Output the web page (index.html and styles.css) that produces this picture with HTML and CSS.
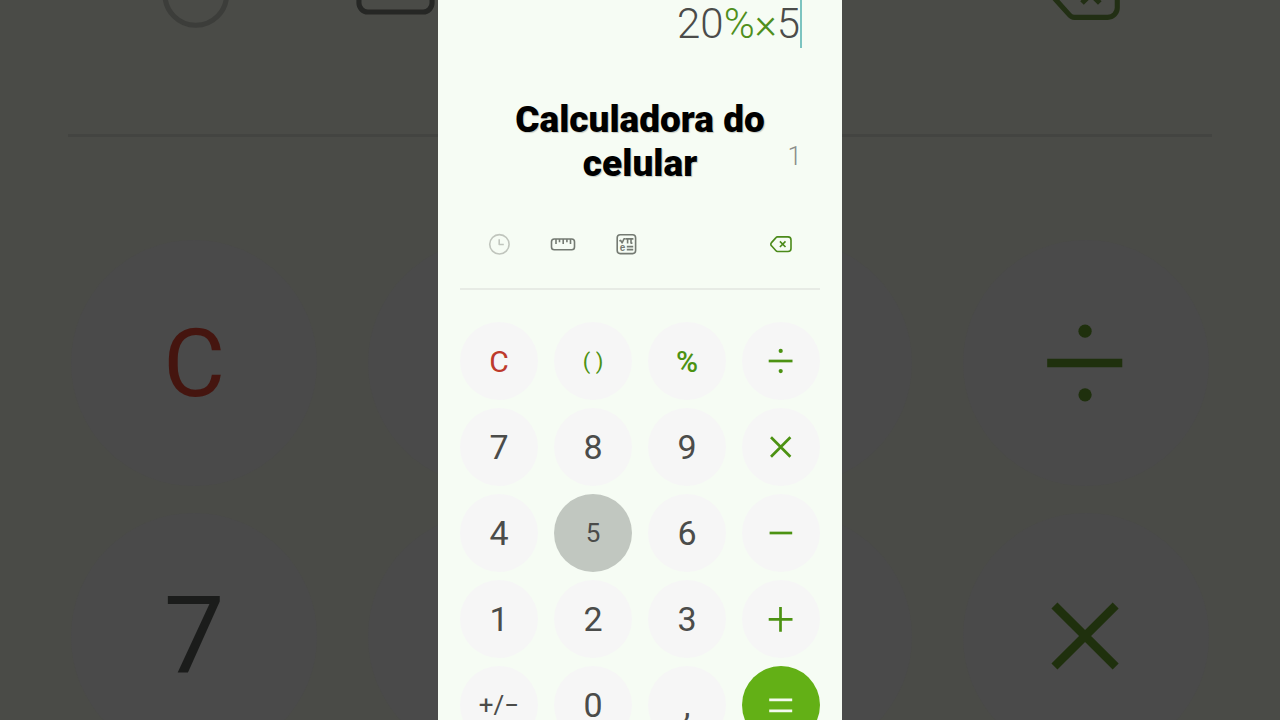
FILE: index.html
```html
<!DOCTYPE html>
<html lang="pt-BR">
<head>
  <meta charset="UTF-8" />
  <meta name="viewport" content="width=device-width, initial-scale=1.0" />
  <title>Calculadora do celular</title>
  <link rel="stylesheet" href="styles.css">
</head>
<body>
  <svg class="sprite" aria-hidden="true">
    <symbol id="clock" viewBox="0 0 28 28">
      <circle cx="14.4" cy="14.3" r="9.7" />
      <path d="M14.2 9.2v5.3h4.6" />
    </symbol>
    <symbol id="ruler" viewBox="0 0 28 28">
      <rect x="2.5" y="9" width="23" height="10.8" rx="2.8" />
      <path d="M7 9v5M10.5 9v3.2M14.2 9v5M17.9 9v3.2M21.5 9v5" />
    </symbol>
    <symbol id="science" viewBox="0 0 28 28">
      <rect x="4.2" y="4.8" width="18.4" height="18.8" rx="3" />
      <path d="M6.4 11l1.3-.6 1.4 2.5 1.9-4.1h1.4" />
      <path d="M12.4 8.9h8M14.6 8.9v4.6M18 8.9v4.2h1.4" />
      <path d="M13.8 16.6h6.4M13.8 19.6h6.4" />
      <text x="6.8" y="20.8">e</text>
    </symbol>
    <symbol id="backspace" viewBox="0 0 28 28">
      <path d="M10.5 6.9H21a3 3 0 0 1 3 3v8.6a3 3 0 0 1-3 3H10.5a2 2 0 0 1-1.5-.7l-4.5-5a2.2 2.2 0 0 1 0-3.2l4.5-5a2 2 0 0 1 1.5-.7z" />
      <path d="M12.9 11.4l5.6 5.6M18.5 11.4L12.9 17" />
    </symbol>
    <symbol id="divide" viewBox="0 0 26 26">
      <path d="M.7 13h23.8" />
      <circle class="dot" cx="12.7" cy="2.9" r="2.1" />
      <circle class="dot" cx="12.7" cy="23.1" r="2.1" />
    </symbol>
    <symbol id="times" viewBox="0 0 26 26">
      <path d="M3 3.3l19.4 19.4M22.4 3.3L3 22.7" />
    </symbol>
    <symbol id="minus" viewBox="0 0 26 26">
      <path d="M1.6 13h22.6" />
    </symbol>
    <symbol id="plus" viewBox="0 0 26 26">
      <path d="M.7 13.3h23.8M12.5 .9v24.8" />
    </symbol>
    <symbol id="equals" viewBox="0 0 26 26">
      <path d="M1.2 7.9h23M1.2 18.9h23" />
    </symbol>
  </svg>

  <div class="stage">
    <!-- enlarged, darkened copy behind the phone -->
    <div class="backdrop" aria-hidden="true">
      <div class="toolbar">
        <svg class="icon muted"><use href="#clock" /></svg>
        <svg class="icon"><use href="#ruler" /></svg>
        <svg class="icon"><use href="#science" /></svg>
        <svg class="icon erase"><use href="#backspace" /></svg>
      </div>
      <hr class="divider" />
      <div class="keys">
        <button class="key clear" tabindex="-1">C</button>
        <button class="key" tabindex="-1"></button>
        <button class="key" tabindex="-1"></button>
        <button class="key op" tabindex="-1"><svg><use href="#divide" /></svg></button>
        <button class="key" tabindex="-1">7</button>
        <button class="key" tabindex="-1"></button>
        <button class="key" tabindex="-1"></button>
        <button class="key op" tabindex="-1"><svg><use href="#times" /></svg></button>
      </div>
    </div>

    <main class="phone">
      <div class="display">
        <div class="expression">20<span class="sign">%×</span>5</div>
        <div class="result-row">
          <h1>Calculadora do celular</h1>
          <output class="result">1</output>
        </div>
      </div>
      <div class="toolbar">
        <button class="tool muted" aria-label="Histórico"><svg class="icon"><use href="#clock" /></svg></button>
        <button class="tool" aria-label="Conversor de unidades"><svg class="icon"><use href="#ruler" /></svg></button>
        <button class="tool" aria-label="Modo científico"><svg class="icon"><use href="#science" /></svg></button>
        <button class="tool erase" aria-label="Apagar"><svg class="icon"><use href="#backspace" /></svg></button>
      </div>
      <hr class="divider" />
      <div class="keys">
        <button class="key clear">C</button>
        <button class="key paren">( )</button>
        <button class="key percent">%</button>
        <button class="key op" aria-label="Dividir"><svg><use href="#divide" /></svg></button>
        <button class="key">7</button>
        <button class="key">8</button>
        <button class="key">9</button>
        <button class="key op" aria-label="Multiplicar"><svg><use href="#times" /></svg></button>
        <button class="key">4</button>
        <button class="key pressed">5</button>
        <button class="key">6</button>
        <button class="key op" aria-label="Subtrair"><svg><use href="#minus" /></svg></button>
        <button class="key">1</button>
        <button class="key">2</button>
        <button class="key">3</button>
        <button class="key op" aria-label="Somar"><svg><use href="#plus" /></svg></button>
        <button class="key negate">+/−</button>
        <button class="key">0</button>
        <button class="key">,</button>
        <button class="key op equals" aria-label="Igual"><svg><use href="#equals" /></svg></button>
      </div>
    </main>
  </div>
</body>
</html>
```

FILE: styles.css
```css
* {
  box-sizing: border-box;
}
body {
  margin: 0;
  font-family: Roboto, sans-serif;
}
.sprite {
  display: none;
}
.stage {
  position: relative;
  display: flex;
  justify-content: center;
  height: 100vh;
  overflow: hidden;
  background-color: #4a4b47;
}
button {
  padding: 0;
  border: none;
  background: none;
  color: inherit;
  font-family: inherit;
  cursor: pointer;
}

/* shared parts */
.toolbar {
  display: flex;
}
.icon {
  display: block;
  flex: none;
  width: 28px;
  height: 28px;
  fill: none;
  stroke: currentColor;
  stroke-width: 1.6;
  stroke-linejoin: round;
}
symbol text {
  font: bold 10px "Liberation Sans", sans-serif;
  fill: currentColor;
  stroke: none;
}
.erase {
  margin-left: auto;
}
.divider {
  border: none;
}
.keys {
  display: grid;
  grid-template-columns: repeat(4, 1fr);
}
.key {
  display: flex;
  align-items: center;
  justify-content: center;
  aspect-ratio: 1;
  border-radius: 50%;
}
.op svg {
  width: 26px;
  height: 26px;
  overflow: visible;
  fill: none;
  stroke: currentColor;
  stroke-width: 2.7;
}
.dot {
  fill: currentColor;
  stroke: none;
}

/* phone */
.phone {
  position: relative;
  width: 404px;
  max-width: 100%;
  background-color: #f6fcf4;
  color: #4b4c4a;
}
.display {
  padding: 0 40px;
}
.expression {
  width: fit-content;
  margin: 0 0 50px auto;
  border-right: 2px solid #7cc4c0;
  font-size: 42px;
  font-weight: 300;
  line-height: 48px;
}
.sign {
  color: #4f8f1c;
}
.result-row {
  display: grid;
  grid-template-columns: 1fr 260px 1fr;
}
h1 {
  grid-column: 2;
  margin: 0;
  color: #000;
  font-size: 37px;
  font-weight: 900;
  line-height: 44px;
  text-align: center;
  text-shadow: 1px 1px 1px #c3c8c1;
}
.result {
  align-self: end;
  padding-bottom: 15px;
  color: #8b8e8a;
  font-size: 26px;
  font-weight: 300;
  line-height: 30px;
  text-align: right;
}
.phone .toolbar {
  gap: 36px;
  margin-top: 44px;
  padding: 0 47px;
  color: #747a72;
}
.phone .muted {
  color: #c0c5bd;
}
.phone .erase {
  color: #4b8a1a;
}
.phone .divider {
  height: 2px;
  margin: 30px 22px 32px;
  background-color: #e7ebe5;
}
.phone .keys {
  gap: 8px 16px;
  padding: 0 22px;
}
.phone .key {
  background-color: #f6f6f6;
  font-size: 34px;
}
.phone .clear {
  color: #bd3a2b;
  font-size: 30px;
}
.phone .paren {
  color: #4c9212;
  font-size: 22px;
}
.phone .percent {
  color: #4c9212;
  font-size: 30px;
  font-weight: 500;
}
.phone .op {
  color: #4c9212;
}
.phone .pressed {
  background-color: #c1c7c0;
  font-size: 26px;
}
.phone .negate {
  font-size: 26px;
}
.phone .equals {
  background-color: #63b016;
  color: #f4faee;
}

/* backdrop */
.backdrop {
  position: absolute;
  inset: 0;
  color: #1b1c1b;
}
.backdrop .toolbar {
  align-items: flex-end;
  gap: 112px;
  height: 134px;
  padding: 0 150px 96px;
  color: #262725;
}
.backdrop .icon {
  width: 89px;
  height: 89px;
}
.backdrop .muted {
  color: #3c3d3a;
}
.backdrop .erase {
  color: #222f14;
}
.backdrop .divider {
  height: 3px;
  margin: 0 68px 103px;
  background-color: #434441;
}
.backdrop .keys {
  gap: 27px 51px;
  padding: 0 71px;
}
.backdrop .key {
  background-color: #4a4a4a;
  font-size: 108px;
}
.backdrop .clear {
  color: #45150f;
  font-size: 95px;
}
.backdrop .op {
  color: #1f300d;
}
.backdrop .op svg {
  width: 82px;
  height: 82px;
}
```
